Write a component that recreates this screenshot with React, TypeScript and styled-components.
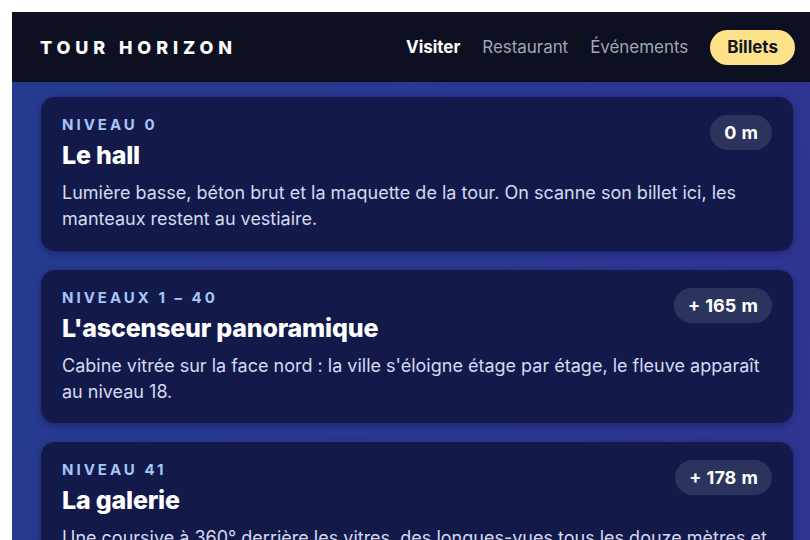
import React from 'react';
import styled, { createGlobalStyle } from 'styled-components';

const GlobalStyle = createGlobalStyle`
    html, body {
        overflow: hidden;
    }
    body {
        margin: 12px 0 0 12px;
        background: #ffffff;
        font-family: Inter, "Noto Sans", sans-serif;
        -webkit-font-smoothing: antialiased;
    }
`;

const Page = styled.div`
    width: 810px;
    min-height: 560px;
    background: linear-gradient(100deg, #253a8f 0%, #2a3790 60%, #303392 100%);
`;

const Header = styled.header`
    display: flex;
    align-items: center;
    justify-content: space-between;
    height: 70px;
    padding: 0 27px 0 28px;
    background: #0c1020;
`;

const Logo = styled.div`
    color: #ffffff;
    font-size: 18px;
    font-weight: 800;
    letter-spacing: 4.9px;
`;

const Nav = styled.nav`
    display: flex;
    align-items: center;
    gap: 22px;
`;

const NavLink = styled.a<{ $active?: boolean }>`
    color: ${props => (props.$active ? '#ffffff' : '#9ea6bd')};
    font-size: 17px;
    font-weight: ${props => (props.$active ? 700 : 400)};
    letter-spacing: -0.05px;
    text-decoration: none;
`;

const TicketButton = styled.a`
    display: flex;
    align-items: center;
    height: 35px;
    padding: 0 17px;
    border-radius: 18px;
    background: #fde28a;
    color: #111320;
    font-size: 17px;
    font-weight: 700;
`;

const List = styled.main`
    display: flex;
    flex-direction: column;
    gap: 19px;
    padding: 15px 29px;
`;

const Card = styled.section`
    display: flex;
    flex-direction: column;
    padding: 19px 21px 18.5px;
    border-radius: 14px;
    background: #131a4a;
    box-shadow: 0 2px 6px rgba(8, 10, 40, 0.35);
`;

const CardHead = styled.div`
    display: flex;
    justify-content: space-between;
    align-items: flex-start;
    gap: 20px;
`;

const Heading = styled.div`
    display: flex;
    flex-direction: column;
`;

const Eyebrow = styled.div`
    color: #a8c4f8;
    font-size: 15px;
    font-weight: 700;
    letter-spacing: 3px;
    line-height: 18px;
`;

const Title = styled.h2`
    margin: 6px 0 0;
    color: #ffffff;
    font-size: 25px;
    font-weight: 800;
    line-height: 30px;
    letter-spacing: -0.2px;
`;

const Text = styled.p`
    margin: 10px 0 0;
    color: #d5daf2;
    font-size: 18px;
    line-height: 26px;
`;

const Badge = styled.div`
    flex-shrink: 0;
    margin-top: -1px;
    padding: 8px 14px;
    border-radius: 18px;
    background: rgba(255, 255, 255, 0.11);
    color: #ffffff;
    font-size: 18px;
    font-weight: 700;
    line-height: 19px;
    word-spacing: 1px;
`;

const levels = [
    {
        eyebrow: 'Niveau 0',
        title: 'Le hall',
        text: 'Lumière basse, béton brut et la maquette de la tour. On scanne son billet ici, les manteaux restent au vestiaire.',
        height: '0 m',
    },
    {
        eyebrow: 'Niveaux 1 – 40',
        title: "L'ascenseur panoramique",
        text: "Cabine vitrée sur la face nord : la ville s'éloigne étage par étage, le fleuve apparaît au niveau 18.",
        height: '+ 165 m',
    },
    {
        eyebrow: 'Niveau 41',
        title: 'La galerie',
        text: 'Une coursive à 360° derrière les vitres, des longues-vues tous les douze mètres et des cartes pour repérer les quartiers.',
        height: '+ 178 m',
    },
];

const App = () => (
    <>
        <GlobalStyle />
        <Page>
            <Header>
                <Logo>TOUR HORIZON</Logo>
                <Nav>
                    <NavLink $active>Visiter</NavLink>
                    <NavLink>Restaurant</NavLink>
                    <NavLink>Événements</NavLink>
                    <TicketButton>Billets</TicketButton>
                </Nav>
            </Header>
            <List>
                {levels.map(level => (
                    <Card key={level.title}>
                        <CardHead>
                            <Heading>
                                <Eyebrow>{level.eyebrow.toUpperCase()}</Eyebrow>
                                <Title>{level.title}</Title>
                            </Heading>
                            <Badge>{level.height}</Badge>
                        </CardHead>
                        <Text>{level.text}</Text>
                    </Card>
                ))}
            </List>
        </Page>
    </>
);

export default App;
